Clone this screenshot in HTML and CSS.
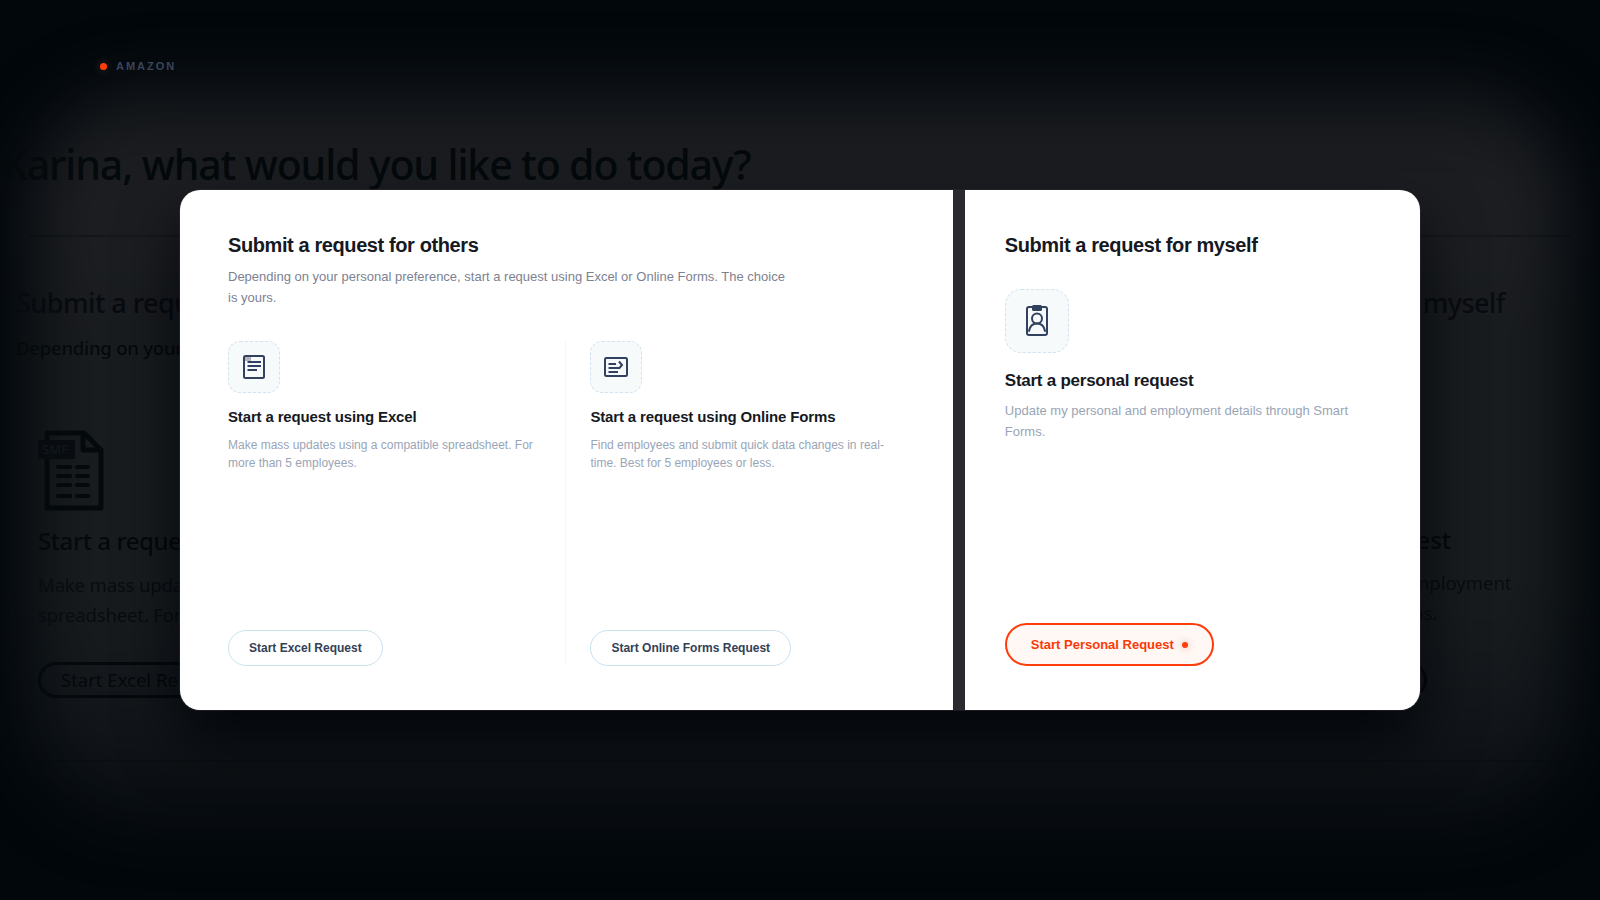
FILE: index.html
```html
<!DOCTYPE html>
<html lang="en">
<head>
  <meta charset="UTF-8" />
  <meta name="viewport" content="width=device-width, initial-scale=1.0" />
  <title>Submit a request</title>
  <link rel="stylesheet" href="styles.css">
</head>
<body>
  <!-- Dimmed page behind the dialog -->
  <div class="backdrop">
    <div class="glow"></div>
    <div class="rule rule-top"></div>
    <div class="rule rule-bottom"></div>
    <div class="ghost ghost-title">Karina, what would you like to do today?</div>
    <div class="ghost ghost-heading">Submit a requ</div>
    <div class="ghost ghost-intro">Depending on your</div>
    <svg class="ghost-icon" width="68" height="84" viewBox="0 0 68 84" fill="none" stroke="#04090c" stroke-width="5" stroke-linecap="round" stroke-linejoin="round">
      <path d="M9 3H46L63 20V78H9Z" />
      <path d="M45 4V20H62" />
      <path d="M20 37H32M39 37H50M20 46H32M39 46H50M20 55H32M39 55H50M20 66H32M39 66H50" stroke-width="4" />
      <rect x="0" y="10" width="37" height="19" fill="#080c10" stroke="none" />
      <text x="4" y="24" class="ghost-badge">SMF</text>
    </svg>
    <div class="ghost ghost-name">Start a reque</div>
    <div class="ghost ghost-text">Make mass upda<br>spreadsheet. For</div>
    <div class="ghost ghost-btn">Start Excel Re</div>
    <div class="ghost ghost-myself">myself</div>
    <div class="ghost ghost-est">est</div>
    <div class="ghost ghost-employment">mployment<br>ns.</div>
    <div class="ghost-pill"></div>
  </div>

  <div class="brand"><span class="brand-dot"></span>AMAZON</div>

  <!-- Dialog -->
  <main class="modal">
    <section class="panel others">
      <h2>Submit a request for others</h2>
      <p class="intro">Depending on your personal preference, start a request using Excel or Online Forms. The choice is yours.</p>
      <div class="options">
        <div class="option">
          <div class="icon">
            <svg width="26" height="26" viewBox="0 0 26 26" fill="none" stroke="#334160" stroke-width="2">
              <rect x="3" y="2" width="20" height="22" rx="1.5" />
              <rect x="4" y="3" width="6" height="4" fill="#b6b3bd" stroke="none" />
              <path d="M6.500 8H20M6.500 12H20M6.500 16H16" />
            </svg>
          </div>
          <h3>Start a request using Excel</h3>
          <p>Make mass updates using a compatible spreadsheet. For more than 5 employees.</p>
          <button type="button">Start Excel Request</button>
        </div>
        <div class="option">
          <div class="icon">
            <svg width="26" height="26" viewBox="0 0 26 26" fill="none" stroke="#334160" stroke-width="2">
              <rect x="2" y="4" width="22" height="18" rx="1.5" />
              <path d="M5.500 10H13M5.500 14H16.500L19 11L16 7.500M5.500 18H15" />
            </svg>
          </div>
          <h3>Start a request using Online Forms</h3>
          <p>Find employees and submit quick data changes in real-time. Best for 5 employees or less.</p>
          <button type="button">Start Online Forms Request</button>
        </div>
      </div>
    </section>

    <section class="panel myself">
      <h2>Submit a request for myself</h2>
      <div class="icon icon-large">
        <svg width="32" height="32" viewBox="0 0 32 32" fill="none" stroke="#334160" stroke-width="2" stroke-linecap="round">
          <rect x="6" y="2" width="20" height="28" rx="2" />
          <rect x="11" y="0" width="10" height="6" rx="1.5" fill="#334160" stroke="none" />
          <circle cx="16" cy="13.5" r="5" />
          <path d="M8 26C9 20.500 12 18.500 16 18.500S23 20.500 24 26" />
        </svg>
      </div>
      <h3>Start a personal request</h3>
      <p>Update my personal and employment details through Smart Forms.</p>
      <button type="button" class="primary">Start Personal Request<span class="pulse"></span></button>
    </section>
  </main>
</body>
</html>
```

FILE: styles.css
```css
* {
  box-sizing: border-box;
}

body {
  margin: 0;
  height: 100vh;
  display: flex;
  justify-content: center;
  align-items: center;
  background: #02070b;
  font-family: "Liberation Sans", Arial, sans-serif;
  overflow: hidden;
}

h2, h3, p {
  margin: 0;
}

/* backdrop */
.backdrop {
  position: absolute;
  inset: 0;
  overflow: hidden;
}

.glow {
  position: absolute;
  inset: 88px 32px 85px;
  border-radius: 110px;
  background: linear-gradient(#16191c 0, #1d1e22 110px, #191c1e 240px, #191c1e 500px, #14181c 600px, #0c1014 720px);
  filter: blur(32px);
}

.rule {
  position: absolute;
  left: 30px;
  right: 30px;
  height: 2px;
  background: rgba(4, 9, 12, 0.3);
}

.rule-top {
  top: 235px;
}

.rule-bottom {
  top: 760px;
}

.ghost {
  position: absolute;
  font-family: "Noto Sans", "Open Sans", sans-serif;
  color: #04090c;
  white-space: nowrap;
}

.ghost-title {
  left: 2px;
  top: 136px;
  font-size: 41px;
  line-height: 56px;
  font-weight: 500;
  letter-spacing: -1.13px;
}

.ghost-heading {
  left: 16px;
  top: 284px;
  font-size: 27px;
  line-height: 38px;
  font-weight: 500;
  letter-spacing: -0.5px;
  color: #070b0f;
}

.ghost-intro {
  left: 16px;
  top: 335px;
  font-size: 18.500px;
  line-height: 26px;
  font-weight: 500;
  letter-spacing: -0.2px;
}

.ghost-icon {
  position: absolute;
  left: 38px;
  top: 430px;
}

.ghost-badge {
  font: 13px "Noto Sans", sans-serif;
  fill: #14181b;
  stroke: none;
}

.ghost-name {
  left: 38px;
  top: 523px;
  font-size: 24px;
  line-height: 36px;
  font-weight: 500;
  letter-spacing: -0.4px;
}

.ghost-text {
  left: 38px;
  top: 570px;
  font-size: 18.500px;
  line-height: 30px;
  letter-spacing: -0.15px;
  color: #080c10;
}

.ghost-btn {
  left: 38px;
  top: 662px;
  width: 260px;
  height: 36px;
  padding-left: 20px;
  border: 3px solid #04090c;
  border-radius: 18px;
  font-size: 18.500px;
  line-height: 30px;
}

.ghost-myself {
  right: 95px;
  top: 284px;
  font-size: 27px;
  line-height: 38px;
  font-weight: 500;
  letter-spacing: -0.5px;
  color: #080c10;
}

.ghost-est {
  right: 149px;
  top: 522px;
  font-size: 24px;
  line-height: 36px;
  font-weight: 500;
}

.ghost-employment {
  left: 1412px;
  top: 568px;
  font-size: 18.500px;
  line-height: 30px;
  color: #080c10;
}

.ghost-pill {
  position: absolute;
  left: 1200px;
  top: 662px;
  width: 227px;
  height: 36px;
  border: 3px solid #04090c;
  border-radius: 18px;
}

/* brand tag */
.brand {
  position: absolute;
  left: 100px;
  top: 60px;
  display: flex;
  align-items: center;
  gap: 9px;
  font-size: 11px;
  line-height: 13px;
  font-weight: bold;
  letter-spacing: 2px;
  color: #3a445b;
}

.brand-dot {
  width: 7px;
  height: 7px;
  border-radius: 50%;
  background: #ff3d0c;
  box-shadow: 0 0 8px rgba(200, 150, 130, 0.3);
}

/* dialog */
.modal {
  position: relative;
  display: grid;
  grid-template-columns: 772.8px 1fr;
  gap: 12px;
  width: 1240px;
  height: 520px;
  background: #2b2a2f;
  border-radius: 20px;
  overflow: hidden;
  box-shadow: 0 0 0 1px rgba(43, 42, 47, 0.6), 0 32px 60px rgba(0, 4, 8, 0.85);
}

.panel {
  display: flex;
  flex-direction: column;
  background: #fff;
  padding: 44px 48px;
}

.myself {
  padding: 44px 40px;
}

h2 {
  font-size: 20px;
  line-height: 23px;
  letter-spacing: -0.4px;
  color: #16191f;
}

.intro {
  margin-top: 9px;
  max-width: 560px;
  font-size: 13px;
  line-height: 21px;
  color: #7c8291;
}

.options {
  display: grid;
  grid-template-columns: 1fr 1fr;
  flex: 1;
  margin-top: 33px;
}

.option {
  display: flex;
  flex-direction: column;
}

.option:first-child {
  padding-right: 24px;
  border-right: 1px solid #f4f6f7;
}

.option:last-child {
  padding-left: 24px;
}

.icon {
  display: flex;
  align-items: center;
  justify-content: center;
  flex: none;
  width: 52px;
  height: 52px;
  background: #f7fafb;
  border: 1px dashed #cfe3ee;
  border-radius: 12px;
}

h3 {
  margin-top: 15px;
  font-size: 15px;
  line-height: 17px;
  letter-spacing: -0.15px;
  color: #16191f;
}

.option p {
  margin-top: 11px;
  font-size: 12px;
  line-height: 18px;
  color: #99a5b6;
}

button {
  align-self: flex-start;
  margin-top: auto;
  height: 36px;
  padding: 0 20px;
  font-family: inherit;
  font-size: 12px;
  font-weight: bold;
  color: #334055;
  background: #fff;
  border: 1px solid #cbe2f0;
  border-radius: 22px;
}

.icon-large {
  width: 64px;
  height: 64px;
  margin-top: 32px;
  border-radius: 16px;
}

.myself h3 {
  margin-top: 18px;
  font-size: 17px;
  line-height: 20px;
  letter-spacing: -0.25px;
}

.myself p {
  margin-top: 9px;
  font-size: 13px;
  line-height: 21px;
  color: #99a5b6;
}

.primary {
  display: flex;
  align-items: center;
  gap: 8px;
  height: 43px;
  padding: 0 24px;
  font-size: 13px;
  color: #f93a08;
  background: #fff8f4;
  border: 2px solid #ff3d0c;
}

.pulse {
  width: 6px;
  height: 6px;
  border-radius: 50%;
  background: #ff3d0c;
  box-shadow: 0 0 7px rgba(190, 120, 90, 0.6);
}
```
